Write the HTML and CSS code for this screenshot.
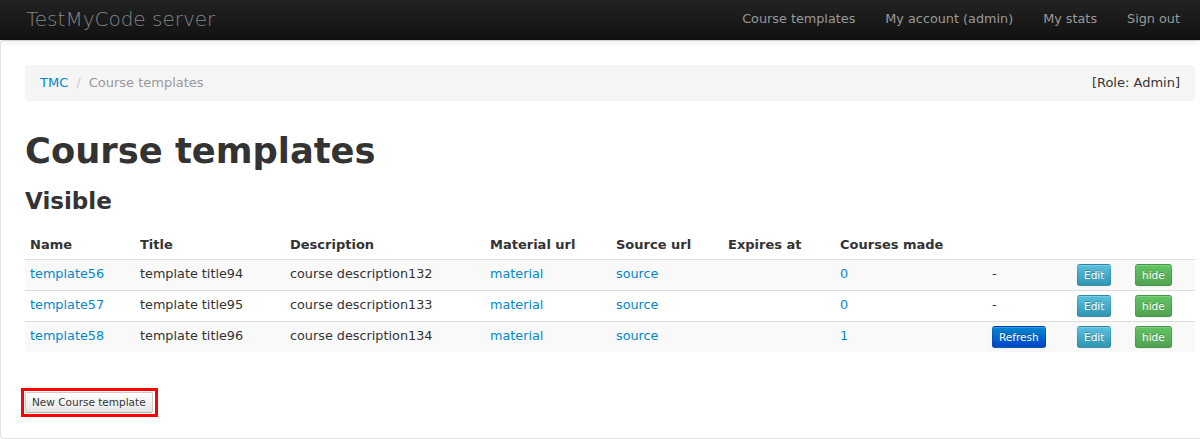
FILE: index.html
```html
<!DOCTYPE html>
<html>
<head>
<meta charset="utf-8">
<title>Course templates</title>
<link rel="stylesheet" href="styles.css">
</head>
<body>
<div class="navbar">
  <a class="brand" href="#">TestMyCode server</a>
  <ul class="nav">
    <li><a href="#">Course templates</a></li>
    <li><a href="#">My account (admin)</a></li>
    <li><a href="#">My stats</a></li>
    <li><a href="#">Sign out</a></li>
  </ul>
</div>
<div class="page">
  <div class="breadcrumb">
    <div class="crumbs">
      <a href="#">TMC</a><span class="divider">/</span><span class="active">Course templates</span>
    </div>
    <div class="role">[Role: Admin]</div>
  </div>
  <h1>Course templates</h1>
  <h2>Visible</h2>
  <table class="table">
    <colgroup>
      <col class="c-name"><col class="c-title"><col class="c-desc"><col class="c-mat"><col class="c-src"><col class="c-exp"><col class="c-made"><col class="c-a1"><col class="c-a2"><col class="c-a3">
    </colgroup>
    <thead>
      <tr>
        <th>Name</th><th>Title</th><th>Description</th><th>Material url</th><th>Source url</th><th>Expires at</th><th>Courses made</th><th></th><th></th><th></th>
      </tr>
    </thead>
    <tbody>
      <tr class="odd">
        <td><a href="#">template56</a></td><td>template title94</td><td>course description132</td><td><a href="#">material</a></td><td><a href="#">source</a></td><td></td><td><a href="#">0</a></td><td>-</td><td><button class="btn btn-mini btn-info">Edit</button></td><td><button class="btn btn-mini btn-success">hide</button></td>
      </tr>
      <tr>
        <td><a href="#">template57</a></td><td>template title95</td><td>course description133</td><td><a href="#">material</a></td><td><a href="#">source</a></td><td></td><td><a href="#">0</a></td><td>-</td><td><button class="btn btn-mini btn-info">Edit</button></td><td><button class="btn btn-mini btn-success">hide</button></td>
      </tr>
      <tr class="odd">
        <td><a href="#">template58</a></td><td>template title96</td><td>course description134</td><td><a href="#">material</a></td><td><a href="#">source</a></td><td></td><td><a href="#">1</a></td><td><button class="btn btn-mini btn-primary">Refresh</button></td><td><button class="btn btn-mini btn-info">Edit</button></td><td><button class="btn btn-mini btn-success">hide</button></td>
      </tr>
    </tbody>
  </table>
  <div class="actions">
    <span class="highlight"><button class="btn btn-small">New Course template</button></span>
  </div>
</div>
</body>
</html>
```
FILE: styles.css
```css
html, body {
  margin: 0;
  padding: 0;
  background: #fff;
}
body {
  font-family: "DejaVu Sans", "Liberation Sans", sans-serif;
  font-size: 13px;
  line-height: 20px;
  color: #333;
}
a {
  color: #0088cc;
  text-decoration: none;
}
.navbar {
  height: 40px;
  background: linear-gradient(to bottom, #222222, #111111);
  display: flex;
  align-items: center;
  justify-content: space-between;
  padding: 0 5px 0 26px;
  position: relative;
  z-index: 2;
  box-shadow: 0 1px 6px rgba(0,0,0,0.12);
}
.brand {
  font-size: 20px;
  font-weight: 200;
  color: #858585;
  line-height: 40px;
  margin-top: -2px;
}
.nav {
  list-style: none;
  margin: 0;
  padding: 0;
  display: flex;
}
.nav a {
  display: block;
  padding: 9px 15px 11px;
  color: #999;
  font-size: 12.8px;
  line-height: 20px;
}
.page {
  border: 1px solid #e3e3e3;
  border-right: 0;
  border-radius: 4px 0 0 4px;
  padding: 24px 5px 25px 24px;
}
.breadcrumb {
  background: #f5f5f5;
  border-radius: 4px;
  padding: 8px 15px;
  margin: 0 0 30px;
  display: flex;
  justify-content: space-between;
}
.divider {
  color: #ccc;
  padding: 0 8px;
}
.active {
  color: #999;
}
h1 {
  font-size: 35.3px;
  line-height: 40px;
  font-weight: bold;
  margin: 10px 0;
}
h2 {
  font-size: 23px;
  line-height: 40px;
  font-weight: bold;
  margin: 10px 0;
}
.table {
  width: 100%;
  border-collapse: collapse;
  border-spacing: 0;
  table-layout: fixed;
  margin-bottom: 40px;
}
.c-name { width: 110px; }
.c-title { width: 150px; }
.c-desc { width: 200px; }
.c-mat { width: 126px; }
.c-src { width: 112px; }
.c-exp { width: 112px; }
.c-made { width: 152px; }
.c-a1 { width: 85px; }
.c-a2 { width: 58px; }
.c-a3 { width: 65px; }
.table th, .table td {
  padding: 4px 5px;
  text-align: left;
  vertical-align: top;
  line-height: 20px;
}
.table td {
  font-size: 12.8px;
}
.table th {
  font-weight: bold;
  vertical-align: bottom;
}
.table td {
  border-top: 1px solid #ddd;
}
.table tr.odd td {
  background: #f9f9f9;
}
.btn {
  display: inline-block;
  font-family: "DejaVu Sans", "Liberation Sans", sans-serif;
  color: #333;
  text-shadow: 0 1px 1px rgba(255,255,255,0.75);
  background: linear-gradient(to bottom, #ffffff, #e6e6e6);
  border: 1px solid #cccccc;
  border-bottom-color: #b3b3b3;
  border-radius: 4px;
  box-shadow: inset 0 1px 0 rgba(255,255,255,0.2), 0 1px 2px rgba(0,0,0,0.05);
  cursor: pointer;
  margin: 0;
  vertical-align: top;
}
.btn-mini {
  font-size: 10.5px;
  line-height: 20px;
  padding: 0 6px;
  border-radius: 3px;
}
.btn-small {
  font-size: 10.5px;
  line-height: 17px;
  padding: 1px 6px;
  border-radius: 2px;
}
.btn-info {
  color: #fff;
  text-shadow: 0 -1px 0 rgba(0,0,0,0.25);
  background: linear-gradient(to bottom, #5bc0de, #2f96b4);
  border-color: rgba(0,0,0,0.1) rgba(0,0,0,0.1) rgba(0,0,0,0.25);
}
.btn-success {
  color: #fff;
  text-shadow: 0 -1px 0 rgba(0,0,0,0.25);
  background: linear-gradient(to bottom, #62c462, #51a351);
  border-color: rgba(0,0,0,0.1) rgba(0,0,0,0.1) rgba(0,0,0,0.25);
}
.btn-primary {
  color: #fff;
  text-shadow: 0 -1px 0 rgba(0,0,0,0.25);
  background: linear-gradient(to bottom, #0088cc, #0044cc);
  border-color: rgba(0,0,0,0.1) rgba(0,0,0,0.1) rgba(0,0,0,0.25);
}
.actions {
  line-height: 0;
}
.highlight {
  display: inline-block;
  border: 3px solid #ff0000;
  padding: 1px 2px 1px 1px;
  margin: -4px 0 -4px -4px;
  line-height: 0;
}
```
